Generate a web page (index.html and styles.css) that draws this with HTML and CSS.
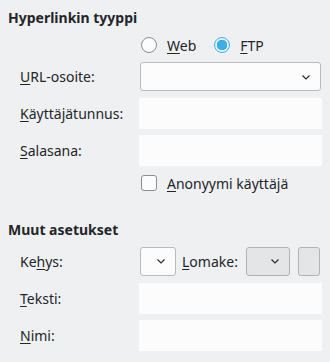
FILE: index.html
```html
<!DOCTYPE html>
<html lang="fi">
<head>
    <meta charset="UTF-8">
    <title>Hyperlinkki</title>
    <link rel="stylesheet" href="styles.css">
</head>
<body>
    <h3 class="group-title">Hyperlinkin tyyppi</h3>

    <div class="row radios">
        <span class="label"></span>
        <div class="control">
            <label class="radio"><span class="radio-dot"></span><span><u>W</u>eb</span></label>
            <label class="radio checked"><span class="radio-dot"></span><span><u>F</u>TP</span></label>
        </div>
    </div>

    <div class="row">
        <span class="label"><u>U</u>RL-osoite:</span>
        <div class="combo wide">
            <svg class="arrow" width="10" height="6" viewBox="0 0 10 6"><path d="M1.5 1.5l3.5 3.5 3.5-3.5" fill="none" stroke="#232629" stroke-width="1.1"/></svg>
        </div>
    </div>

    <div class="row">
        <span class="label"><u>K</u>äyttäjätunnus:</span>
        <div class="field"></div>
    </div>

    <div class="row">
        <span class="label"><u>S</u>alasana:</span>
        <div class="field"></div>
    </div>

    <div class="row check-row">
        <span class="label"></span>
        <label class="check"><span class="check-box"></span><span><u>A</u>nonyymi käyttäjä</span></label>
    </div>

    <h3 class="group-title second">Muut asetukset</h3>

    <div class="row frame-row">
        <span class="label">Ke<u>h</u>ys:</span>
        <div class="control">
            <div class="combo small">
                <svg class="arrow" width="10" height="6" viewBox="0 0 10 6"><path d="M1.5 1.5l3.5 3.5 3.5-3.5" fill="none" stroke="#232629" stroke-width="1.1"/></svg>
            </div>
            <span class="inline-label"><u>L</u>omake:</span>
            <div class="combo grey">
                <svg class="arrow" width="10" height="6" viewBox="0 0 10 6"><path d="M1.5 1.5l3.5 3.5 3.5-3.5" fill="none" stroke="#232629" stroke-width="1.1"/></svg>
            </div>
            <div class="button"></div>
        </div>
    </div>

    <div class="row">
        <span class="label"><u>T</u>eksti:</span>
        <div class="field"></div>
    </div>

    <div class="row">
        <span class="label"><u>N</u>imi:</span>
        <div class="field"></div>
    </div>
</body>
</html>
```

FILE: styles.css
```css
body {
    font-family: 'Noto Sans', 'Open Sans', sans-serif;
    font-size: 14px;
    color: #232629;
    background-color: #eff0f1;
    margin: 0;
    padding: 8px 8px 0 8px;
}
u {
    text-underline-offset: 2px;
}
.group-title {
    font-size: 14px;
    font-weight: bold;
    margin: 0;
    height: 19px;
    line-height: 19px;
}
.group-title.second {
    margin-top: 26px;
}
.row {
    display: flex;
    align-items: center;
    height: 31px;
    margin-top: 6px;
}
.label {
    width: 120px;
    padding-left: 12px;
    flex-shrink: 0;
}
.control {
    display: flex;
    align-items: center;
}
.radios {
    height: 20px;
    margin-top: 8px;
}
.radio, .check {
    display: flex;
    align-items: center;
    margin-left: 1px;
    margin-right: 17px;
}
.radio-dot {
    width: 14px;
    height: 14px;
    border: 1px solid #8b8d8f;
    border-radius: 50%;
    background-color: #fcfcfc;
    margin-right: 10px;
    box-sizing: content-box;
}
.radio.checked .radio-dot {
    border-color: #3daee9;
    background: radial-gradient(circle, #3daee9 0 5px, #e6f4fb 5.5px);
}
.combo {
    display: flex;
    align-items: center;
    justify-content: flex-end;
    box-sizing: border-box;
    height: 29px;
    border: 1px solid #b8babc;
    border-radius: 3px;
    background-color: #fcfcfc;
    padding-right: 9px;
}
.combo.wide {
    width: 181px;
}
.combo.small {
    width: 36px;
}
.combo.grey {
    width: 44px;
    background-color: #e4e5e6;
    border-color: #b0b2b4;
}
.field {
    width: 183px;
    height: 31px;
    margin-left: -1px;
    background-color: #fcfcfc;
}
.check-row {
    height: 22px;
    margin-top: 6px;
}
.check-box {
    width: 14px;
    height: 14px;
    border: 1px solid #8b8d8f;
    border-radius: 3px;
    background-color: #fcfcfc;
    margin-right: 10px;
}
.frame-row {
    height: 32px;
}
.inline-label {
    margin: 0 8px 0 6px;
}
.button {
    box-sizing: border-box;
    width: 22px;
    height: 29px;
    margin-left: 8px;
    border: 1px solid #b0b2b4;
    border-radius: 3px;
    background-color: #e4e5e6;
}
```
